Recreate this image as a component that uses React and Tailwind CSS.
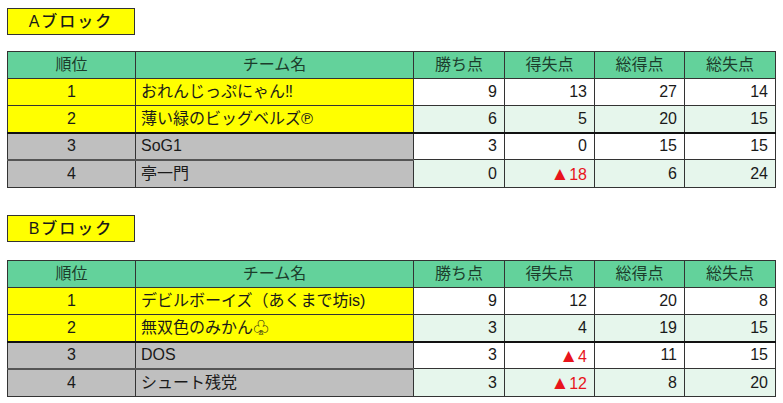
import React from "react";

const blocks = [
  {
    label: "Aブロック",
    rows: [
      { rank: 1, name: "おれんじっぷにゃん‼", win: 9, diff: "13", gf: 27, ga: 14 },
      { rank: 2, name: "薄い緑のビッグベルズ℗", win: 6, diff: "5", gf: 20, ga: 15 },
      { rank: 3, name: "SoG1", win: 3, diff: "0", gf: 15, ga: 15 },
      { rank: 4, name: "亭一門", win: 0, diff: "▲18", gf: 6, ga: 24 },
    ],
  },
  {
    label: "Bブロック",
    rows: [
      { rank: 1, name: "デビルボーイズ（あくまで坊is)", win: 9, diff: "12", gf: 20, ga: 8 },
      { rank: 2, name: "無双色のみかん♧", win: 3, diff: "4", gf: 19, ga: 15 },
      { rank: 3, name: "DOS", win: 3, diff: "▲4", gf: 11, ga: 15 },
      { rank: 4, name: "シュート残党", win: 3, diff: "▲12", gf: 8, ga: 20 },
    ],
  },
];

const heads = ["順位", "チーム名", "勝ち点", "得失点", "総得点", "総失点"];
const widths = ["w-[128px]", "w-[278px]", "w-[91px]", "w-[90px]", "w-[90px]", "w-[91px]"];

function Diff({ value }) {
  if (!value.startsWith("▲")) return value;
  return (
    <span className="text-[#e8141c]">
      <span className="text-[19px]">▲</span>{value.slice(1)}
    </span>
  );
}

function Block({ block, labelTop, tableTop }) {
  return (
    <div className="pl-[7px]">
      <div className={`${labelTop} w-[128px] h-[27px] border border-[#333] bg-[#ffff00] flex items-center justify-center text-[16px] tracking-[2px] text-[#1a1a1a] font-medium`}>
        {block.label}
      </div>
      <table className={`${tableTop} border-collapse table-fixed w-[768px] text-[16px] leading-none text-[#1a1a1a]`}>
        <colgroup>
          {widths.map((w, i) => <col key={i} className={w} />)}
        </colgroup>
        <thead>
          <tr className="h-[27px] bg-[#63d29b]">
            {heads.map((h) => (
              <th key={h} className="border border-[#333] font-normal text-center p-0 text-[#1c3d2c]">{h}</th>
            ))}
          </tr>
        </thead>
        <tbody>
          {block.rows.map((r, i) => {
            const top = r.rank <= 2;
            const leftBg = top ? "bg-[#ffff00]" : "bg-[#bfbfbf]";
            const numBg = i % 2 === 0 ? "bg-white" : "bg-[#e6f6ec]";
            const bottom = i === 1 ? "border-b-2 border-b-[#111]" : "";
            const leftBottom = i === 2 ? "border-b-2 border-b-[#555]" : bottom;
            return (
              <tr key={r.rank} className={i === 3 ? "h-[28px]" : "h-[27px]"}>
                <td className={`border border-[#333] ${leftBottom} ${leftBg} text-center p-0`}>{r.rank}</td>
                <td className={`border border-[#333] ${leftBottom} ${leftBg} text-left pl-[5px] py-0 whitespace-nowrap`}>{r.name}</td>
                <td className={`border border-[#333] ${bottom} ${numBg} text-right pr-[7px] py-0`}>{r.win}</td>
                <td className={`border border-[#333] ${bottom} ${numBg} text-right pr-[7px] py-0`}><Diff value={r.diff} /></td>
                <td className={`border border-[#333] ${bottom} ${numBg} text-right pr-[7px] py-0`}>{r.gf}</td>
                <td className={`border border-[#333] ${bottom} ${numBg} text-right pr-[7px] py-0`}>{r.ga}</td>
              </tr>
            );
          })}
        </tbody>
      </table>
    </div>
  );
}

export default function App() {
  return (
    <div className="w-[783px] h-[403px] bg-white overflow-hidden" style={{ fontFamily: '"Liberation Sans", Arial, "Noto Sans CJK JP", sans-serif' }}>
      <Block block={blocks[0]} labelTop="mt-[8px]" tableTop="mt-[16px]" />
      <Block block={blocks[1]} labelTop="mt-[27px]" tableTop="mt-[18px]" />
    </div>
  );
}
